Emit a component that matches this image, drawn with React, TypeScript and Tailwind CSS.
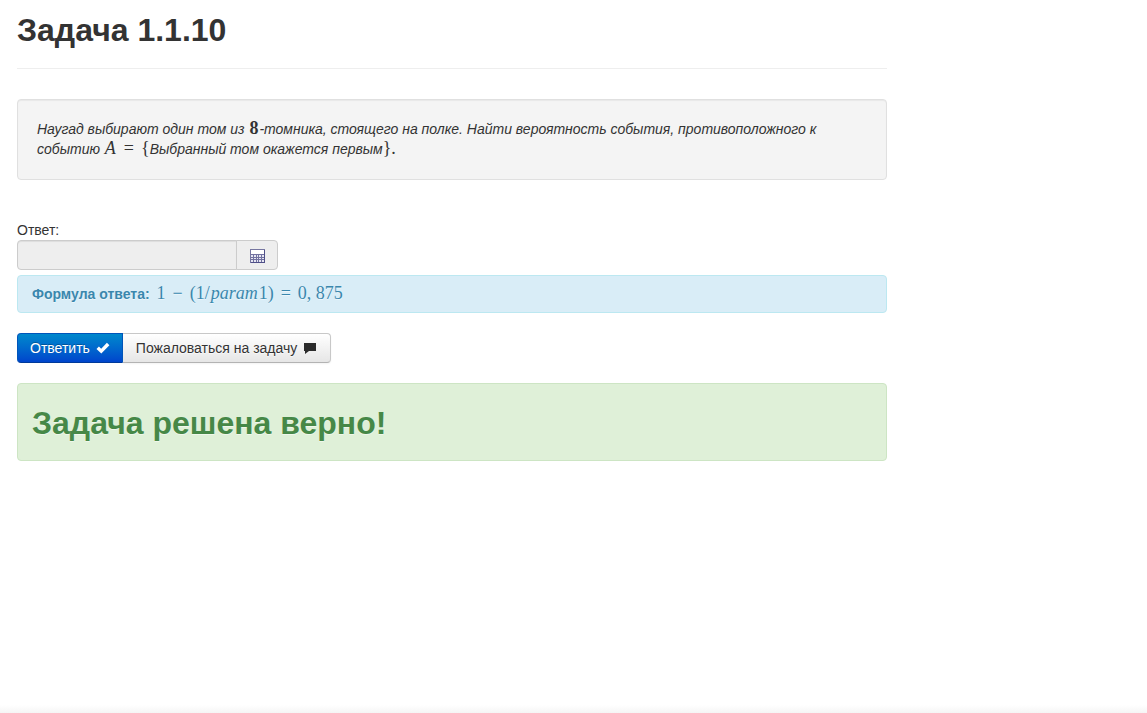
import type { ReactNode } from "react";

function MathText({ children }: { children: ReactNode }) {
  return <span className="font-['Liberation_Serif',serif] text-[18px] leading-none not-italic">{children}</span>;
}

function MathVariable({ children }: { children: ReactNode }) {
  return <span className="mx-px font-['Liberation_Serif',serif] text-[18px] leading-none italic">{children}</span>;
}

function MathOperator({ children }: { children: ReactNode }) {
  return (
    <span className="mx-[7px] font-['Liberation_Serif',serif] text-[18px] leading-none not-italic">{children}</span>
  );
}

function CalculatorIcon() {
  return (
    <svg width="16" height="16" viewBox="0 0 16 16" aria-hidden="true" shapeRendering="crispEdges">
      <rect x="0.5" y="1.5" width="14" height="13" fill="#e6e6f2" stroke="#7676a0" />
      <rect x="1" y="2" width="13" height="4" fill="#ffffff" />
      <path d="M1 6.5h14M1 9.5h14M1 11.5h14M3.5 7v8M6.5 7v8M8.5 7v8M11.5 7v8" stroke="#7272a0" />
      <path d="M14.5 2v13M1 14.5h14" stroke="#4f4f88" />
    </svg>
  );
}

function CheckIcon() {
  return (
    <svg width="14" height="14" viewBox="0 0 14 14" aria-hidden="true">
      <path d="M0.5 8 2.9 5.6 5.2 7.8 10.9 1.8 13.4 4.2 5.3 12.5Z" fill="#ffffff" />
    </svg>
  );
}

function CommentIcon() {
  return (
    <svg width="14" height="14" viewBox="0 0 14 14" aria-hidden="true">
      <path d="M1 2h12v8H6l-4 3V10H1Z" fill="#2b2b2b" />
    </svg>
  );
}

export default function App() {
  return (
    <div className="flex min-h-screen flex-col bg-white font-['Liberation_Sans',Arial,sans-serif] text-[14px] leading-5 text-[#333333]">
      <main className="mx-[17px] flex max-w-[870px] grow flex-col">
        <header className="mb-[30px] border-b border-[#eeeeee] pt-[10px] pb-[18px]">
          <h1 className="text-[32px] leading-10 font-bold">Задача 1.1.10</h1>
        </header>

        <section className="mb-10 rounded border border-[#e0e0e0] bg-[#f4f4f4] px-[19px] pt-[19px] pb-5 shadow-[inset_0_1px_1px_rgba(0,0,0,0.05)]">
          <p className="italic">
            Наугад выбирают один том из{" "}
            <strong className="mx-px font-['Liberation_Serif',serif] text-[18px] leading-none not-italic">8</strong>
            -томника, стоящего на полке. Найти вероятность события, противоположного к событию{" "}
            <MathVariable>A</MathVariable>
            <MathOperator>=</MathOperator>
            <MathText>{"{"}</MathText>
            Выбранный том окажется первым
            <MathText>{"}."}</MathText>
          </p>
        </section>

        <form onSubmit={(event) => event.preventDefault()}>
          <label htmlFor="answer" className="block">
            Ответ:
          </label>
          <div className="mb-[5px] flex">
            <input
              id="answer"
              type="text"
              readOnly
              className="h-[30px] w-[220px] rounded-l border border-[#cccccc] bg-[#eeeeee] px-[6px] shadow-[inset_0_1px_1px_rgba(0,0,0,0.075)] outline-none"
            />
            <button
              type="button"
              aria-label="Калькулятор"
              className="-ml-px flex h-[30px] w-[42px] items-center justify-center rounded-r border border-[#cccccc] bg-[#eeeeee] pt-px pl-px"
            >
              <CalculatorIcon />
            </button>
          </div>

          <div className="mb-5 rounded border border-[#bce8f1] bg-[#d9edf7] px-[14px] py-2 text-[#3a87ad]">
            <p className="[text-shadow:0_1px_0_rgba(255,255,255,0.5)]">
              <strong className="mr-[3px]">Формула ответа:</strong> <MathText>1</MathText>
              <MathOperator>−</MathOperator>
              <MathText>(1/</MathText>
              <MathVariable>param</MathVariable>
              <MathText>1)</MathText>
              <MathOperator>=</MathOperator>
              <MathText>0, 875</MathText>
            </p>
          </div>

          <div className="mb-5 flex">
            <button
              type="submit"
              className="flex h-[30px] items-center gap-[6px] rounded-l border border-[#0055bb] border-b-[#003a9a] bg-linear-to-b from-[#0088cc] to-[#0044cc] px-3 text-white [text-shadow:0_-1px_0_rgba(0,0,0,0.25)]"
            >
              Ответить
              <CheckIcon />
            </button>
            <button
              type="button"
              className="flex h-[30px] items-center gap-[6px] rounded-r border border-l-0 border-[#c8c8c8] border-b-[#b3b3b3] bg-linear-to-b from-white to-[#e6e6e6] px-[13px] shadow-[0_1px_2px_rgba(0,0,0,0.05)] [text-shadow:0_1px_1px_rgba(255,255,255,0.75)]"
            >
              Пожаловаться на задачу
              <CommentIcon />
            </button>
          </div>
        </form>

        <div role="status" className="rounded border border-[#cde5c4] bg-[#dff0d8] px-[14px] pt-[19px] pb-[17px] text-[#468847]">
          <h2 className="text-[32px] leading-10 font-bold [text-shadow:0_1px_0_rgba(255,255,255,0.5)]">
            Задача решена верно!
          </h2>
        </div>
      </main>
      <footer className="h-2 bg-linear-to-b from-white to-[#f5f5f5]" />
    </div>
  );
}
